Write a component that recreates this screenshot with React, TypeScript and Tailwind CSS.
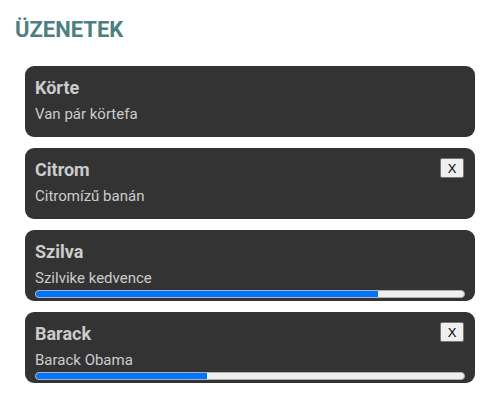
import React from 'react';

interface Message {
  title: string;
  body: string;
  closable?: boolean;
  progress?: number;
}

const messages: Message[] = [
  { title: 'Körte', body: 'Van pár körtefa' },
  { title: 'Citrom', body: 'Citromízű banán', closable: true },
  { title: 'Szilva', body: 'Szilvike kedvence', progress: 80 },
  { title: 'Barack', body: 'Barack Obama', closable: true, progress: 40 },
];

const MessageCard: React.FC<{ msg: Message }> = ({ msg }) => (
  <div className="h-[71px] rounded-[9px] bg-[#333333] pl-[10px] pr-[11px] pt-[10px] text-[#cccccc] flex flex-col">
    <div className="flex items-start justify-between">
      <h3 className="text-[18px] leading-[24px] font-bold">{msg.title}</h3>
      {msg.closable && (
        <button className="h-[20px] w-[24px] rounded-[2px] border border-[#767676] bg-[#efefef] text-[13px] leading-none text-black font-['Liberation_Sans',sans-serif]">
          X
        </button>
      )}
    </div>
    <p className="mt-[4px] text-[15px] leading-[20px]">{msg.body}</p>
    {msg.progress !== undefined && (
      <div className="mt-[2px] mr-[-1px] h-[8px] rounded-full bg-[#efefef] border border-[#b0b0b0] overflow-hidden">
        <div className="h-full bg-[#0075ff]" style={{ width: `${msg.progress}%` }} />
      </div>
    )}
  </div>
);

export default function App() {
  return (
    <div className="min-h-[401px] w-[499px] bg-white font-['Roboto',sans-serif]">
      <h1 className="pl-[15px] pt-[17px] text-[22px] leading-[26px] font-bold text-[#4e7f80]">ÜZENETEK</h1>
      <div className="mt-[23px] ml-[25px] w-[450px] flex flex-col gap-[11px]">
        {messages.map((m) => (
          <MessageCard key={m.title} msg={m} />
        ))}
      </div>
    </div>
  );
}
